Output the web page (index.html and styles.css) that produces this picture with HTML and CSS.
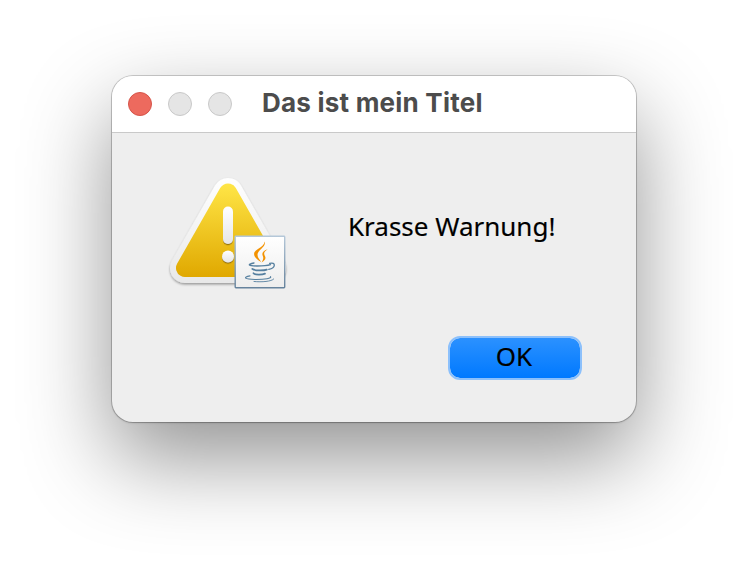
FILE: index.html
```html
<!DOCTYPE html>
<html lang="de">
<head>
<meta charset="utf-8">
<title>Das ist mein Titel</title>
<link rel="stylesheet" href="styles.css">
</head>
<body>
<main class="dialog">
  <header class="titlebar">
    <div class="lights"><span class="light close"></span><span class="light"></span><span class="light"></span></div>
    <h1 class="title">Das ist mein Titel</h1>
  </header>
  <section class="content">
    <div class="message">
      <svg class="icon" viewBox="164 172 128 128" aria-hidden="true">
        <defs>
          <linearGradient id="rim" gradientUnits="userSpaceOnUse" x1="0" y1="177" x2="0" y2="283"><stop offset="0" stop-color="#fff"/><stop offset="1" stop-color="#e8e8e8"/></linearGradient>
          <linearGradient id="gold" gradientUnits="userSpaceOnUse" x1="0" y1="183" x2="0" y2="277"><stop offset="0" stop-color="#ffe647"/><stop offset="1" stop-color="#e0a800"/></linearGradient>
          <linearGradient id="mark" x1="0" y1="0" x2="0" y2="1"><stop offset="0" stop-color="#fff"/><stop offset="1" stop-color="#e6e6e6"/></linearGradient>
          <linearGradient id="edge" x1="0" y1="0" x2="0" y2="1"><stop offset="0" stop-color="#b5c8d9"/><stop offset="1" stop-color="#66839d"/></linearGradient>
          <linearGradient id="paper" x1="0" y1="0" x2="0" y2="1"><stop offset="0" stop-color="#fff"/><stop offset="1" stop-color="#ededed"/></linearGradient>
          <filter id="drop" x="-40%" y="-40%" width="180%" height="180%"><feDropShadow dx="0" dy="1.5" stdDeviation="1.2" flood-color="#000" flood-opacity=".36"/></filter>
          <filter id="markdrop" x="-40%" y="-20%" width="180%" height="150%"><feDropShadow dx="0" dy="1.2" stdDeviation=".7" flood-color="#5a4000" flood-opacity=".6"/></filter>
        </defs>
        <path d="M228 193 185 268H271Z" fill="url(#rim)" stroke="url(#rim)" stroke-width="30" stroke-linejoin="round" filter="url(#drop)"/>
        <path d="M228 192.500 185 268H271Z" fill="url(#gold)" stroke="url(#gold)" stroke-width="18" stroke-linejoin="round"/>
        <g fill="url(#mark)" filter="url(#markdrop)"><rect x="223" y="206.500" width="10" height="37.500" rx="5"/><circle cx="228" cy="256.500" r="6"/></g>
        <rect x="235.200" y="236.200" width="49.500" height="51.500" rx=".7" fill="url(#paper)" stroke="url(#edge)" stroke-width="1.400"/>
        <g fill="#f39200">
          <path d="M264.600 241.500C266.500 247 257.500 250 257.500 254.800 257.500 258 260 260 261.300 262.200 257.700 260 254 257.400 254.100 253.800 254.200 249 263.900 248 264.600 241.500Z"/>
          <path d="M267.600 249.200C263.400 250.600 262.100 252.700 262.400 254.500 262.800 257 264.500 257.500 261.600 262.600 265.500 260.100 266.100 258 264.900 255.900 263.500 253.400 263.900 251.600 267.600 249.200Z"/>
        </g>
        <g fill="none" stroke="#557f9f" stroke-linecap="round" stroke-width="1.300">
          <path d="M254 263C246.500 264.600 248.500 266 257 266 264 266 268 265.400 270.500 264.600"/>
          <path d="M269.600 263.400C276.200 261.600 275.800 268 268.800 269.400"/>
          <path d="M252.300 268.900C254 270.900 264 270.700 266.800 269.600" stroke-width="1.700"/>
          <path d="M253.500 273.200C255 275.200 262.500 274.700 265 273.600" stroke-width="1.700"/>
          <path d="M250 275.900C242.500 277.300 244.500 279.300 255 279.500 265 279.600 272 278.400 270.500 276.600" stroke-width="1.100"/>
          <path d="M254 281.500C262 282.200 271.500 281.600 273.700 279" stroke-width=".9"/>
        </g>
      </svg>
      <p class="text">Krasse Warnung!</p>
    </div>
    <div class="actions"><button class="ok" type="button">OK</button></div>
  </section>
</main>
</body>
</html>
```
FILE: styles.css
```css
* { box-sizing: border-box; }
html, body { height: 100%; }
body { margin: 0; padding: 76px 112px; background: #fff; overflow: hidden; }
.dialog {
  width: 524px; height: 346px; border-radius: 21px; background: #eee;
  box-shadow: 0 0 0 1px rgba(0,0,0,.18), 0 1px 2px rgba(0,0,0,.18), 0 36px 88px rgba(0,0,0,.43);
}
.titlebar {
  display: flex; align-items: center; height: 57px; padding: 0 16px;
  background: #fff; border-bottom: 1px solid #c9c9c9; border-radius: 21px 21px 0 0;
}
.lights { display: flex; gap: 16px; }
.light { width: 24px; height: 24px; border-radius: 50%; background: #e5e5e5; border: 1px solid #c9c9c9; }
.close { background: #ed6a5e; border-color: #d65449; }
.title {
  margin: 0 0 0 30px; padding-bottom: 2px;
  font: 700 26px/32px Inter, sans-serif; letter-spacing: .22px;
  color: #4c4c4c; white-space: nowrap;
}
.content { height: 289px; padding: 39px 54px 42px 52px; display: flex; flex-direction: column; }
.message { display: flex; align-items: flex-start; height: 164px; }
.icon { width: 128px; height: 128px; flex: none; }
.text {
  margin: 36px 0 0 56px; font: 400 26px/36px "Noto Sans", sans-serif;
  color: #000; white-space: nowrap; -webkit-text-stroke: .15px #000;
}
.actions { display: flex; justify-content: flex-end; }
.ok {
  width: 134px; height: 44px; padding: 0 2px 5px 0; border: 2px solid #8cc0fb; border-radius: 12px;
  background: linear-gradient(#2b91ff, #0079ff) padding-box;
  font: 400 26px/36px "Noto Sans", sans-serif; color: #000; -webkit-text-stroke: .15px #000;
}
```
